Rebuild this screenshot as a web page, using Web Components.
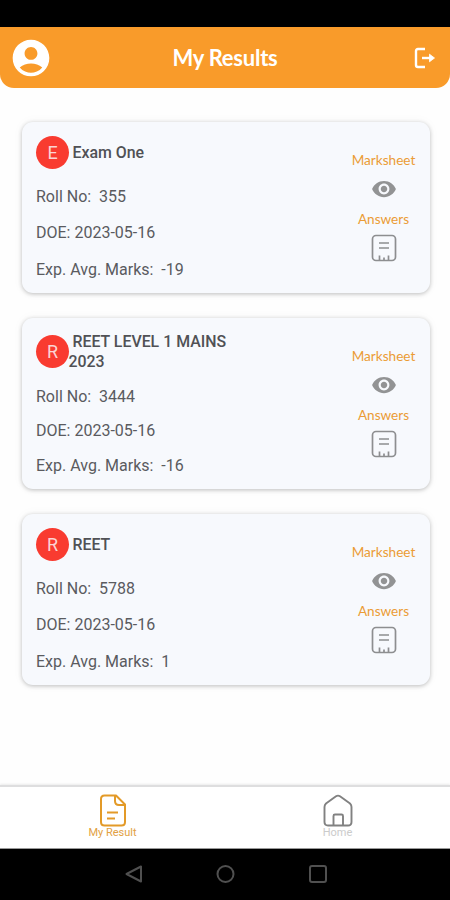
<!DOCTYPE html>
<html lang="en">
<head>
<meta charset="utf-8">
<title>My Results</title>
<style>
    body {
        margin: 0;
        background: #fefefe;
        font-family: Roboto, "Liberation Sans", sans-serif;
    }
</style>
</head>
<body>
<results-app>
    <app-header slot="header">My Results</app-header>
    <result-card initial="E" roll="355" doe="2023-05-16" marks="-19"> Exam One</result-card>
    <result-card initial="R" roll="3444" doe="2023-05-16" marks="-16"> REET LEVEL 1 MAINS 2023</result-card>
    <result-card initial="R" roll="5788" doe="2023-05-16" marks="1"> REET</result-card>
    <tab-bar slot="tabs"></tab-bar>
    <system-nav slot="system"></system-nav>
</results-app>

<script>
class ResultsApp extends HTMLElement {
    constructor() {
        super();
        this.attachShadow({mode: 'open'});
        this.shadowRoot.innerHTML = `
            <style>
                :host {
                    display: flex;
                    flex-direction: column;
                    height: 900px;
                    width: 450px;
                    overflow: hidden;
                }
                .status {
                    height: 27px;
                    background: #000;
                }
                main {
                    flex: 1;
                    display: flex;
                    flex-direction: column;
                    gap: 25px;
                    padding: 34px 20px 0 22px;
                }
            </style>
            <div class="status"></div>
            <slot name="header"></slot>
            <main><slot></slot></main>
            <slot name="tabs"></slot>
            <slot name="system"></slot>
        `;
    }
}

class AppHeader extends HTMLElement {
    constructor() {
        super();
        this.attachShadow({mode: 'open'});
        this.shadowRoot.innerHTML = `
            <style>
                :host {
                    display: grid;
                    grid-template-columns: 44px 1fr 44px;
                    align-items: center;
                    box-sizing: border-box;
                    height: 61px;
                    padding: 0 9px;
                    background: #f99b2a;
                    border-radius: 0 0 14px 14px;
                    color: #fff;
                }
                h1 {
                    margin: 0;
                    font: 700 22px Lato, sans-serif;
                    letter-spacing: -0.25px;
                    text-align: center;
                }
                svg { display: block; }
                .logout {
                    justify-self: end;
                    margin-right: 5px;
                }
            </style>
            <svg width="44" height="44" viewBox="0 0 24 24" fill="#fff">
                <path d="M12 2C6.480 2 2 6.480 2 12s4.480 10 10 10 10-4.480 10-10S17.520 2 12 2zm0 4c1.930 0 3.500 1.570 3.500 3.500S13.930 13 12 13s-3.500-1.570-3.500-3.500S10.070 6 12 6zm0 14c-2.030 0-4.430-.82-6.140-2.880C7.550 15.800 9.680 15 12 15s4.450.8 6.140 2.120C16.430 19.180 14.030 20 12 20z"/>
            </svg>
            <h1><slot></slot></h1>
            <svg class="logout" width="22" height="22" viewBox="0 0 22 22" fill="none" stroke="#fff" stroke-width="2.400">
                <path d="M11 2H4Q2 2 2 4V18Q2 20 4 20H11"/>
                <path d="M8 11H17"/>
                <path d="M15.500 7.200L20.500 11L15.500 14.800Z" fill="#fff" stroke-width=".8"/>
            </svg>
        `;
    }
}

class ResultCard extends HTMLElement {
    constructor() {
        super();
        this.attachShadow({mode: 'open'});
        this.shadowRoot.innerHTML = `
            <style>
                :host {
                    display: flex;
                    justify-content: space-between;
                    box-sizing: border-box;
                    height: 171px;
                    padding: 14px;
                    background: #f7f9fd;
                    border-radius: 11px;
                    box-shadow: 0 1px 4px rgba(0,0,0,0.24), 0 0 12px rgba(0,0,0,0.04);
                    color: #5a5b5f;
                }
                .info {
                    display: flex;
                    flex-direction: column;
                    justify-content: space-between;
                    font-size: 16px;
                    line-height: 19px;
                    white-space: pre;
                }
                .head {
                    display: flex;
                    align-items: center;
                }
                .avatar {
                    width: 33px;
                    height: 33px;
                    border-radius: 50%;
                    background: #f93b30;
                    color: #fbd4d4;
                    font-size: 18px;
                    line-height: 33px;
                    text-align: center;
                }
                .name {
                    max-width: 178px;
                    margin-left: -0.5px;
                    font-size: 15.9px;
                    font-weight: 500;
                    line-height: 19.5px;
                    white-space: pre-wrap;
                    color: #505155;
                }
                .actions {
                    display: flex;
                    flex-direction: column;
                    align-items: center;
                    width: 65px;
                    padding-top: 14px;
                    font: 13.6px/20px Lato, sans-serif;
                    color: #eb9c35;
                }
                svg { display: block; }
                .eye { margin: 6px 0 7px; }
                .sheet { margin-top: 5px; }
            </style>
            <div class="info">
                <div class="head">
                    <div class="avatar"></div>
                    <div class="name"><slot></slot></div>
                </div>
                <div class="roll"></div>
                <div class="doe"></div>
                <div class="marks"></div>
            </div>
            <div class="actions">
                <span class="link">Marksheet</span>
                <svg class="eye" width="26" height="26" viewBox="0 0 24 24" fill="#929394">
                    <path d="M12 4.500C7 4.500 2.730 7.610 1 12c1.730 4.390 6 7.500 11 7.500s9.270-3.110 11-7.500c-1.730-4.390-6-7.500-11-7.500zM12 17c-2.760 0-5-2.240-5-5s2.240-5 5-5 5 2.240 5 5-2.240 5-5 5zm0-8c-1.660 0-3 1.340-3 3s1.340 3 3 3 3-1.340 3-3-1.340-3-3-3z"/>
                </svg>
                <span class="link">Answers</span>
                <svg class="sheet" width="26" height="28" viewBox="0 0 26 28" fill="none" stroke="#8d8e90" stroke-width="1.700">
                    <rect x="1.500" y="1.500" width="23" height="25" rx="3.500"/>
                    <path d="M8 9H18M8 14H18M8.500 26V21.500M17.500 26V21.500M13 26V23.500"/>
                </svg>
            </div>
        `;
    }

    connectedCallback() {
        const set = (cls, text) => this.shadowRoot.querySelector(cls).textContent = text;
        set(".avatar", this.getAttribute('initial'));
        set(".roll", `Roll No:  ${this.getAttribute('roll')}`);
        set(".doe", `DOE: ${this.getAttribute('doe')}`);
        set(".marks", `Exp. Avg. Marks:  ${this.getAttribute('marks')}`);
    }
}

class TabBar extends HTMLElement {
    constructor() {
        super();
        this.attachShadow({mode: 'open'});
        this.shadowRoot.innerHTML = `
            <style>
                :host {
                    display: flex;
                    box-sizing: border-box;
                    height: 64px;
                    background: #fff;
                    border-top: 2px solid #dededf;
                    border-bottom: 1px solid #999;
                    box-shadow: 0 -1px 2px rgba(0,0,0,0.08);
                }
                .tab {
                    flex: 1;
                    display: flex;
                    flex-direction: column;
                    align-items: center;
                    padding-top: 7px;
                    font-size: 11px;
                    line-height: 12px;
                    color: #e2a143;
                }
                .home { color: #cbcbcb; }
                svg { display: block; }
            </style>
            <div class="tab">
                <svg width="28" height="33" viewBox="0 0 28 33" fill="none" stroke="#e39a28" stroke-width="2" stroke-linejoin="round">
                    <path d="M17 1.500H5.500Q2 1.500 2 5V28Q2 31.500 5.500 31.500H22.500Q26 31.500 26 28V10.500Z"/>
                    <path d="M16 2V7Q16 11 20 11H26"/>
                    <path d="M8 18.500H19M8 24.500H16"/>
                </svg>
                <span>My Result</span>
            </div>
            <div class="tab home">
                <svg width="30" height="33" viewBox="0 0 30 33" fill="none" stroke="#818181" stroke-width="1.900" stroke-linejoin="round">
                    <path d="M13 2.300Q15 1 17 2.300L27 9.500Q28.500 11 28.500 13V28Q28.500 31.500 25 31.500H5Q1.500 31.500 1.500 28V13Q1.500 11 3 9.500Z"/>
                    <path d="M10.500 31V22Q10.500 20.500 12 20.500H18.500Q20 20.500 20 22V31"/>
                </svg>
                <span>Home</span>
            </div>
        `;
    }
}

class SystemNav extends HTMLElement {
    constructor() {
        super();
        this.attachShadow({mode: 'open'});
        this.shadowRoot.innerHTML = `
            <style>
                :host {
                    display: flex;
                    align-items: center;
                    justify-content: center;
                    gap: 72px;
                    box-sizing: border-box;
                    height: 51px;
                    padding: 0 0 2px 2px;
                    background: #000;
                }
                svg { display: block; }
            </style>
            <svg width="20" height="20" fill="none" stroke="#505050" stroke-width="2" stroke-linejoin="round"><path d="M17 2.500V17.500L2.500 10Z"/></svg>
            <svg width="20" height="20" fill="none" stroke="#505050" stroke-width="2"><circle cx="9.500" cy="10" r="8"/></svg>
            <svg width="20" height="20" fill="none" stroke="#505050" stroke-width="2"><rect x="2" y="2" width="16" height="16" rx="2"/></svg>
        `;
    }
}

customElements.define("results-app", ResultsApp);
customElements.define("app-header", AppHeader);
customElements.define("result-card", ResultCard);
customElements.define("tab-bar", TabBar);
customElements.define("system-nav", SystemNav);
</script>
</body>
</html>
